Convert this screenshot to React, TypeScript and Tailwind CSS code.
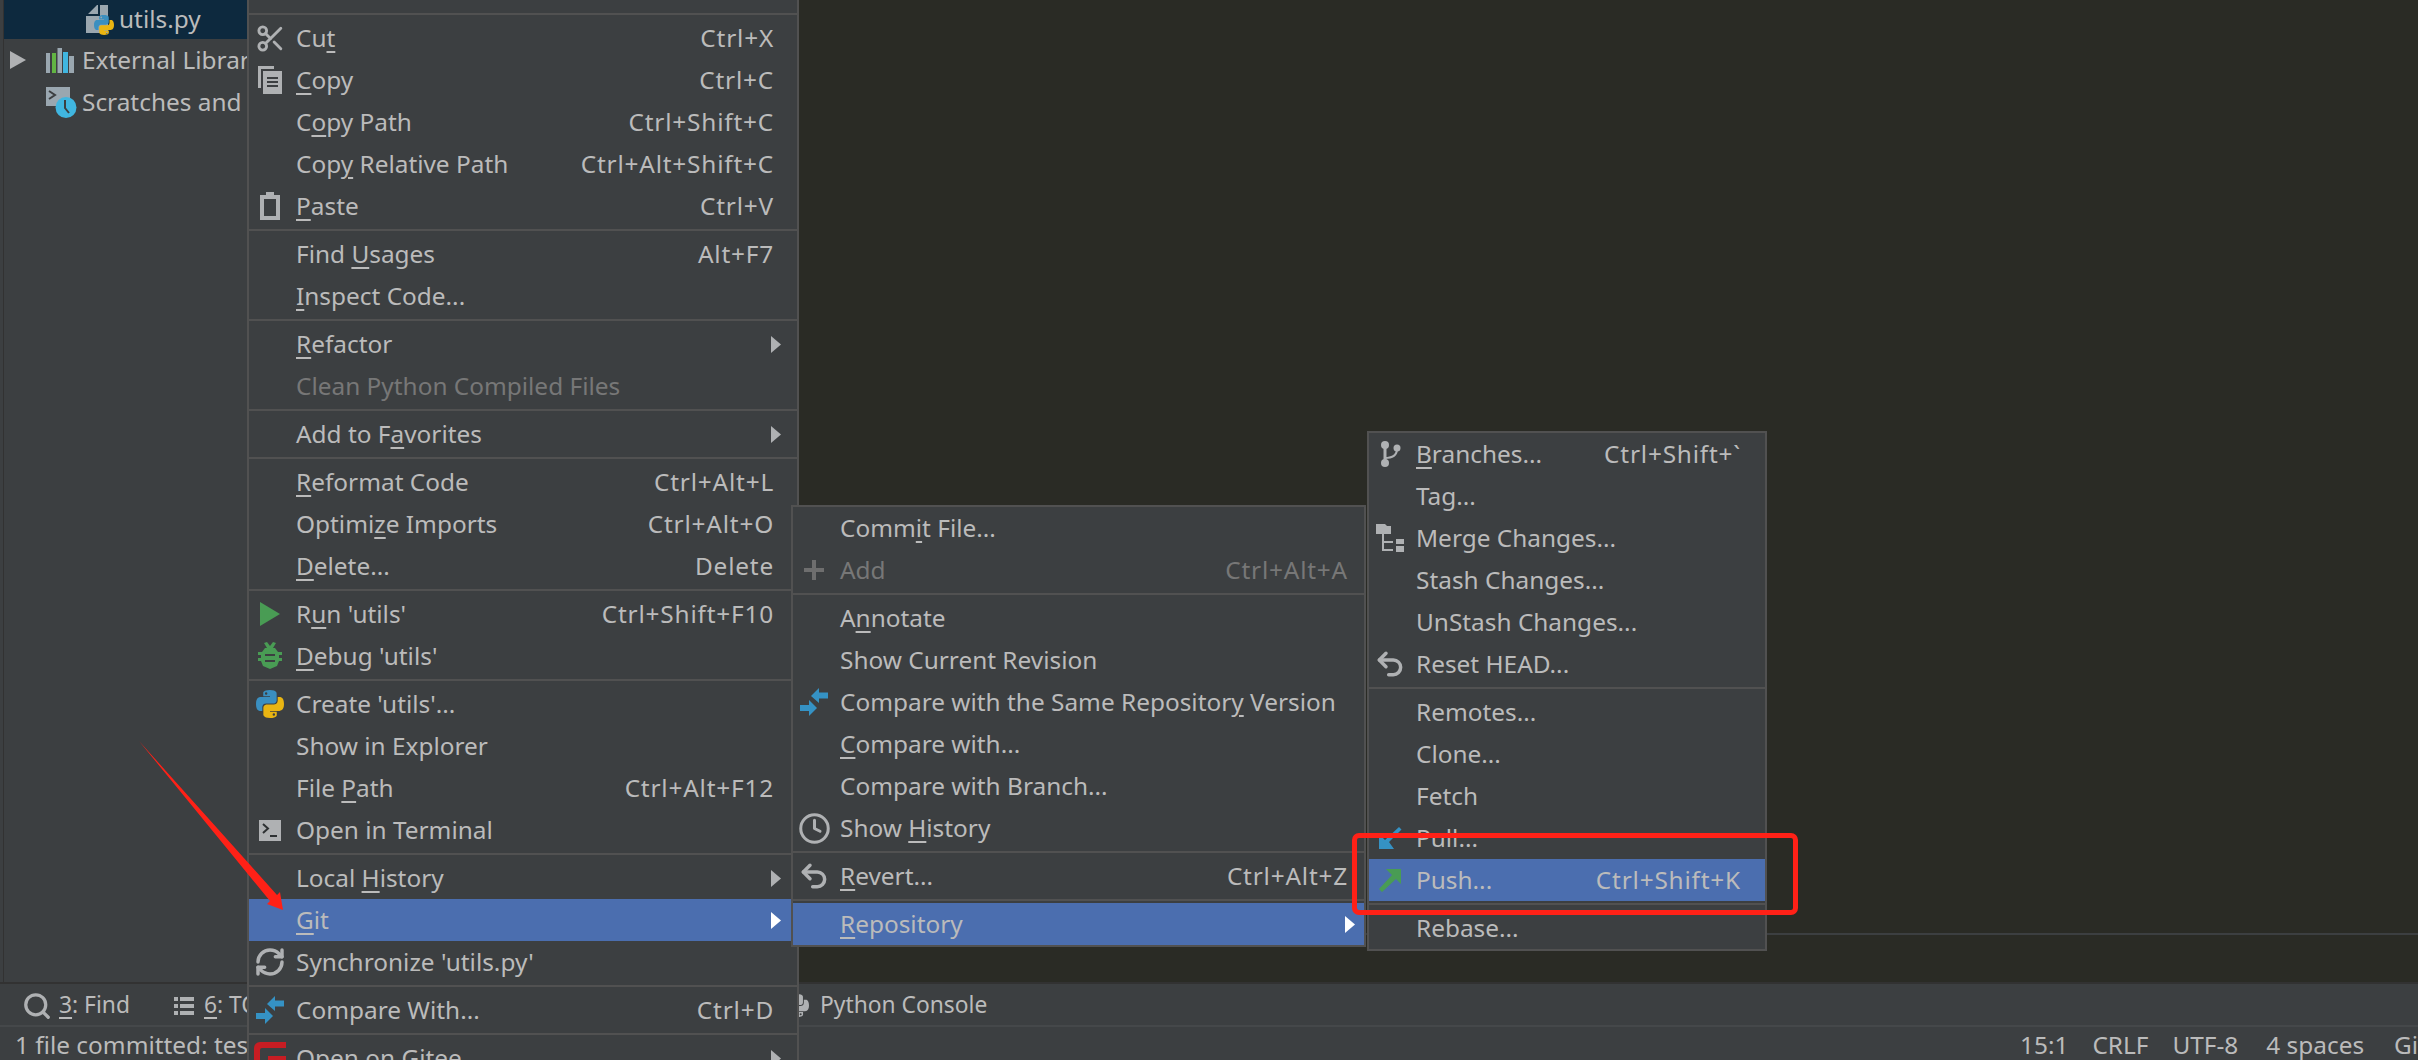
import { Clock, RefreshCw, Scissors, Search, Undo2 } from "lucide-react";
import type { ReactNode } from "react";

type Item = {
  label: string; // & marks the mnemonic letter
  shortcut?: string;
  icon?: ReactNode;
  submenu?: boolean;
  disabled?: boolean;
  active?: boolean;
};

const bluePy =
  "M11.9 0C5.8 0 6.2 2.6 6.2 2.6v2.7h5.8v.8H3.9S0 5.7 0 11.9s3.4 6 3.4 6h2v-2.9s-.1-3.4 3.3-3.4h5.8s3.2.1 3.2-3.1V3.2S18.2 0 11.9 0zM8.7 1.9a1 1 0 110 2.1 1 1 0 010-2.1z";
const yellowPy =
  "M12.1 24c6.1 0 5.7-2.6 5.7-2.6v-2.7H12v-.8h8.1s3.9.4 3.9-5.8-3.4-6-3.4-6h-2v2.9s.1 3.4-3.3 3.4H9.5s-3.2-.1-3.2 3.1v5.3S5.8 24 12.1 24zm3.2-1.9a1 1 0 110-2.1 1 1 0 010 2.1z";

function PythonIcon({ size = 28, gray = false }: { size?: number; gray?: boolean }) {
  return (
    <svg width={size} height={size} viewBox="0 0 24 24" className="shrink-0">
      <path d={bluePy} fill={gray ? "#afb1b3" : "#3a8fc0"} fillRule="evenodd" />
      <path d={yellowPy} fill={gray ? "#afb1b3" : "#e9b512"} fillRule="evenodd" />
    </svg>
  );
}

function CopyIcon() {
  return (
    <svg width="26" height="28" viewBox="0 0 26 28" fill="#afb1b3">
      <path d="M1 0h16v3H4v19H1z" />
      <path fillRule="evenodd" d="M6 5h19v23H6zM10 11v2h11v-2zM10 15v2h11v-2zM10 19v2h11v-2z" />
    </svg>
  );
}

function PasteIcon() {
  return (
    <svg width="22" height="28" viewBox="0 0 22 28" fill="#afb1b3">
      <path fillRule="evenodd" d="M1 3h6V0h8v3h6v25H1zM5 7v17h12V7z" />
    </svg>
  );
}

function RunIcon() {
  return (
    <svg width="22" height="24" viewBox="0 0 22 24" fill="#499c54">
      <path d="M1 0l20 12L1 24z" />
    </svg>
  );
}

function BugIcon() {
  return (
    <svg width="26" height="28" viewBox="0 0 26 28" fill="#499c54">
      <path d="M7 1l3-1 3 4 3-4 3 1-3 5h-6z" />
      <path
        fillRule="evenodd"
        d="M8 6h10l3 4h4v3h-3v3h3v3h-3l-2 5-7 3-7-3-2-5H1v-3h3v-3H1v-3h4zM8 12v2h10v-2zM8 18v2h10v-2z"
      />
    </svg>
  );
}

function TerminalIcon() {
  return (
    <svg width="22" height="21" viewBox="0 0 22 21">
      <rect width="22" height="21" fill="#afb1b3" />
      <path d="M4 4l5 4.5L4 13" fill="none" stroke="#2e3133" strokeWidth="2" />
      <path d="M11 15h7v2h-7z" fill="#2e3133" />
    </svg>
  );
}

function CompareIcon() {
  return (
    <svg width="28" height="28" viewBox="0 0 28 28" fill="#3592c4">
      <path d="M11 8l8-8v4.5h9v6h-9V15z" />
      <path d="M17 20l-8-8v5H0v6h9v5z" />
    </svg>
  );
}

function GiteeIcon() {
  return (
    <svg width="32" height="32" viewBox="0 0 32 32">
      <path
        fillRule="evenodd"
        d="M6 0h26v6H8a2 2 0 00-2 2v16a2 2 0 002 2h16a2 2 0 002-2v-4H14v-6h18v12a6 6 0 01-6 6H6a6 6 0 01-6-6V6a6 6 0 016-6z"
        fill="#c71d23"
      />
    </svg>
  );
}

function PlusIcon() {
  return (
    <svg width="20" height="20" viewBox="0 0 20 20" fill="#6e6e6e">
      <path d="M8 0h4v8h8v4h-8v8H8v-8H0V8h8z" />
    </svg>
  );
}

function BranchIcon() {
  return (
    <svg width="22" height="28" viewBox="0 0 22 28" fill="#afb1b3">
      <circle cx="6" cy="5" r="4" />
      <circle cx="6" cy="23" r="4" />
      <circle cx="18" cy="8" r="3.5" />
      <path d="M4.5 5h3v18h-3z" />
      <path d="M6 17c6 0 11-2 11-8h2c0 7-5 10-13 10z" />
    </svg>
  );
}

function MergeIcon() {
  return (
    <svg width="29" height="29" viewBox="0 0 29 29" fill="#afb1b3">
      <path d="M0 0h9l2 2h4v8H0z" />
      <path d="M6 10h2v7h9v2H8v6h9v2H6z" />
      <path d="M20 15h8v5h-8zM20 22h8v6h-8z" />
    </svg>
  );
}

function PullIcon() {
  return (
    <svg width="23" height="23" viewBox="0 0 23 23" fill="#3592c4">
      <path d="M20 0l2.500 2.500L10 15l5 7H0V7l6 6z" />
    </svg>
  );
}

function PushIcon() {
  return (
    <svg width="23" height="23" viewBox="0 0 23 23" fill="#499c54">
      <path d="M7 0h15v15l-5-5L3 23l-3-3L13 6z" />
    </svg>
  );
}

function LibraryIcon() {
  return (
    <svg width="29" height="25" viewBox="0 0 29 25" className="shrink-0">
      <rect x="0" y="5" width="4" height="20" fill="#9aa7b0" />
      <rect x="6" y="5" width="4" height="20" fill="#62b543" />
      <rect x="11.500" y="0" width="4.500" height="25" fill="#9aa7b0" />
      <rect x="17" y="4" width="5" height="21" fill="#40b6e0" />
      <rect x="23" y="8" width="5" height="17" fill="#9aa7b0" />
    </svg>
  );
}

function ScratchIcon() {
  return (
    <svg width="31" height="31" viewBox="0 0 31 31" className="shrink-0">
      <path d="M0 0h24v19H0z" fill="#9aa7b0" />
      <path d="M3 4l6 4-6 4" fill="none" stroke="#3c3f41" strokeWidth="2" />
      <circle cx="20" cy="20.500" r="10.500" fill="#40b6e0" />
      <path d="M19 13v8l4 5" fill="none" stroke="#3c3f41" strokeWidth="2" />
    </svg>
  );
}

function FileIcon() {
  return (
    <div className="relative w-[28px] h-[30px] shrink-0">
      <svg width="23" height="28" viewBox="0 0 23 28" fill="#9aa7b0">
        <path d="M11 0h1v9H2zM14 0h8v28H0V11h14z" />
      </svg>
      <div className="absolute right-0 bottom-0">
        <PythonIcon size={20} />
      </div>
    </div>
  );
}

function Triangle({ active }: { active?: boolean }) {
  return (
    <svg width="10" height="17" viewBox="0 0 10 17" fill={active ? "#ffffff" : "#afb1b3"} className="-mr-[7px]">
      <path d="M0 0l10 8.500L0 17z" />
    </svg>
  );
}

function Label({ text }: { text: string }) {
  const [before, after] = text.split("&");
  if (after === undefined) return <span>{text}</span>;
  return (
    <span>
      {before}
      <span className="underline underline-offset-[4px] decoration-2">{after[0]}</span>
      {after.slice(1)}
    </span>
  );
}

function MenuRow({ item, pad }: { item: Item; pad: string }) {
  return (
    <div
      className={`flex items-center h-[42px] whitespace-nowrap ${pad} ${item.active ? "bg-[#4b6eaf]" : ""} ${
        item.disabled ? "text-[#777777]" : "text-[#bbbbbb]"
      }`}
    >
      <div className="w-[47px] pr-[5px] flex items-center justify-center shrink-0">{item.icon}</div>
      <div className="flex-1">
        <Label text={item.label} />
      </div>
      {item.shortcut && <div className="tracking-[0.8px]">{item.shortcut}</div>}
      {item.submenu && <Triangle active={item.active} />}
    </div>
  );
}

function Sep() {
  return (
    <div className="h-[6px] flex items-center">
      <div className="h-[2px] w-full bg-[#515151]" />
    </div>
  );
}

function Sections({ sections, pad }: { sections: Item[][]; pad: string }) {
  return (
    <>
      {sections.map((items, i) => (
        <div key={i}>
          {i > 0 && <Sep />}
          {items.map((item) => (
            <MenuRow key={item.label} item={item} pad={pad} />
          ))}
        </div>
      ))}
    </>
  );
}

const iconStroke = "#afb1b3";

const mainMenu: Item[][] = [
  [
    { label: "Cu&t", shortcut: "Ctrl+X", icon: <Scissors size={31} color={iconStroke} strokeWidth={2.2} /> },
    { label: "&Copy", shortcut: "Ctrl+C", icon: <CopyIcon /> },
    { label: "C&opy Path", shortcut: "Ctrl+Shift+C" },
    { label: "Cop&y Relative Path", shortcut: "Ctrl+Alt+Shift+C" },
    { label: "&Paste", shortcut: "Ctrl+V", icon: <PasteIcon /> },
  ],
  [
    { label: "Find &Usages", shortcut: "Alt+F7" },
    { label: "&Inspect Code..." },
  ],
  [
    { label: "&Refactor", submenu: true },
    { label: "Clean Python Compiled Files", disabled: true },
  ],
  [{ label: "Add to F&avorites", submenu: true }],
  [
    { label: "&Reformat Code", shortcut: "Ctrl+Alt+L" },
    { label: "Optimi&ze Imports", shortcut: "Ctrl+Alt+O" },
    { label: "&Delete...", shortcut: "Delete" },
  ],
  [
    { label: "R&un 'utils'", shortcut: "Ctrl+Shift+F10", icon: <RunIcon /> },
    { label: "&Debug 'utils'", icon: <BugIcon /> },
  ],
  [
    { label: "Create 'utils'...", icon: <PythonIcon /> },
    { label: "Show in Explorer" },
    { label: "File &Path", shortcut: "Ctrl+Alt+F12" },
    { label: "Open in Terminal", icon: <TerminalIcon /> },
  ],
  [
    { label: "Local &History", submenu: true },
    { label: "&Git", submenu: true, active: true },
    { label: "Synchronize 'utils.py'", icon: <RefreshCw size={32} color={iconStroke} strokeWidth={2.6} /> },
  ],
  [{ label: "Compare With...", shortcut: "Ctrl+D", icon: <CompareIcon /> }],
  [{ label: "Open on Gitee", submenu: true, icon: <GiteeIcon /> }],
];

const gitMenu: Item[][] = [
  [
    { label: "Comm&it File..." },
    { label: "Add", shortcut: "Ctrl+Alt+A", disabled: true, icon: <PlusIcon /> },
  ],
  [
    { label: "A&nnotate" },
    { label: "Show Current Revision" },
    { label: "Compare with the Same Repositor&y Version", icon: <CompareIcon /> },
    { label: "&Compare with..." },
    { label: "Compare with Branch..." },
    { label: "Show &History", icon: <Clock size={33} color={iconStroke} strokeWidth={2.2} /> },
  ],
  [{ label: "&Revert...", shortcut: "Ctrl+Alt+Z", icon: <Undo2 size={32} color={iconStroke} strokeWidth={2.6} /> }],
  [{ label: "&Repository", submenu: true, active: true }],
];

const repoMenu: Item[][] = [
  [
    { label: "&Branches...", shortcut: "Ctrl+Shift+`", icon: <BranchIcon /> },
    { label: "Tag..." },
    { label: "Merge Changes...", icon: <MergeIcon /> },
    { label: "Stash Changes..." },
    { label: "UnStash Changes..." },
    { label: "Reset HEAD...", icon: <Undo2 size={32} color={iconStroke} strokeWidth={2.6} /> },
  ],
  [
    { label: "Remotes..." },
    { label: "Clone..." },
    { label: "Fetch" },
    { label: "Pull...", icon: <PullIcon /> },
    { label: "Push...", shortcut: "Ctrl+Shift+K", active: true, icon: <PushIcon /> },
  ],
  [{ label: "Rebase..." }],
];

function Sidebar() {
  return (
    <div className="w-[247px] shrink-0 pl-[3px] bg-[#3c3f41]">
      <div className="h-full border-l border-[#323232] text-[#bbbbbb] whitespace-nowrap overflow-hidden">
        <div className="h-[39px] bg-[#0d293e] flex items-center pl-[82px] gap-[5px]">
          <FileIcon />
          <span>utils.py</span>
        </div>
        <div className="h-[42px] flex items-center pl-[6px]">
          <svg width="16" height="18" viewBox="0 0 16 18" fill="#afb1b3" className="shrink-0">
            <path d="M0 0l16 9L0 18z" />
          </svg>
          <span className="ml-[20px] shrink-0">
            <LibraryIcon />
          </span>
          <span className="ml-[7px]">External Libraries</span>
        </div>
        <div className="h-[42px] flex items-center pl-[42px] gap-[5px]">
          <ScratchIcon />
          <span>Scratches and Consoles</span>
        </div>
      </div>
    </div>
  );
}

function ToolBar() {
  return (
    <div className="h-[45px] shrink-0 pt-[2px] bg-[#3c3f41] border-t-2 border-b-2 border-t-[#323232] border-b-[#45484a] flex items-center text-[#bbbbbb] text-[22.8px] whitespace-nowrap">
      <div className="w-[174px] pl-[22px] flex items-center gap-[7px] shrink-0">
        <Search size={30} color={iconStroke} strokeWidth={2.6} />
        <Label text="&3: Find" />
      </div>
      <div className="w-[612px] flex items-center gap-[10px] shrink-0">
        <svg width="20" height="20" viewBox="0 0 20 20" fill="#afb1b3" className="shrink-0">
          <path d="M0 1h4v4H0zM6 1h14v4H6zM0 8h4v4H0zM6 8h14v4H6zM0 15h4v4H0zM6 15h14v4H6z" />
        </svg>
        <Label text="&6: TODO" />
      </div>
      <div className="flex items-center gap-[11px]">
        <PythonIcon size={23} gray />
        <span>Python Console</span>
      </div>
    </div>
  );
}

function StatusBar() {
  return (
    <div className="h-[33px] shrink-0 pt-[3px] bg-[#3c3f41] flex items-center text-[#bbbbbb] whitespace-nowrap pl-[15px]">
      <span className="flex-1">1 file committed: test</span>
      <div className="w-[398px] shrink-0 overflow-hidden flex gap-[24px]">
        <span>15:1</span>
        <span>CRLF</span>
        <span className="mr-[4px]">UTF-8</span>
        <span className="mr-[6px]">4 spaces</span>
        <span>Git: master</span>
      </div>
    </div>
  );
}

export default function App() {
  return (
    <div className="relative h-[1060px] overflow-hidden bg-[#2a2b25] flex flex-col font-['Noto_Sans',sans-serif] text-[24.4px]">
      <div className="flex flex-1 min-h-0">
        <Sidebar />
        <div className="flex-1 flex flex-col">
          <div className="flex-1" />
          <div className="h-[2px] bg-[#3c3f41]" />
          <div className="h-[47px]" />
        </div>
      </div>
      <ToolBar />
      <StatusBar />

      {/* context menu and its two open submenus */}
      <div className="absolute left-[247px] top-0 w-[552px] border-x-2 border-[#515151] bg-[#3c3f41]">
        <div className="h-[11px]" />
        <Sep />
        <Sections sections={mainMenu} pad="pr-[23px]" />
      </div>
      <div className="absolute left-[791px] top-[505px] w-[575px] border-2 border-[#515151] bg-[#3c3f41]">
        <Sections sections={gitMenu} pad="pr-[16px]" />
      </div>
      <div className="absolute left-[1367px] top-[431px] w-[400px] border-2 border-[#515151] bg-[#3c3f41]">
        <Sections sections={repoMenu} pad="pr-[24px]" />
      </div>

      {/* red annotations drawn over the screenshot */}
      <div className="absolute left-[1352px] top-[833px] w-[446px] h-[82px] border-[5px] border-[#ff2117] rounded-[7px]" />
      <svg className="absolute left-[130px] top-[730px]" width="170" height="190" viewBox="0 0 170 190" fill="#ff2117">
        <path d="M9 11L147 165l3-3 3 18-16-6 3-3z" />
      </svg>
    </div>
  );
}
